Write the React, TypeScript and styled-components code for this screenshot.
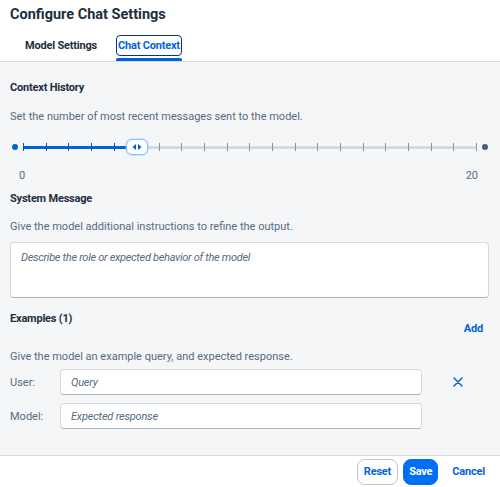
import React, { useState } from "react";
import styled, { createGlobalStyle } from "styled-components";

const GlobalStyle = createGlobalStyle`
  html, body {
    margin: 0;
    padding: 0;
    background: #ffffff;
    font-family: Roboto, "Liberation Sans", Arial, sans-serif;
    color: #1d2d3e;
  }
  * { box-sizing: border-box; }
`;

const Dialog = styled.div`
  width: 500px;
  height: 487px;
  display: flex;
  flex-direction: column;
  background: #fff;
`;

const Header = styled.header`
  background: #fff;
  padding: 0 10px;
  border-bottom: 1px solid #d9dcdf;
  box-shadow: 0 1px 1px rgba(0, 0, 0, 0.04);
`;

const Title = styled.h1`
  margin: 0;
  height: 30px;
  line-height: 30px;
  font-size: 14.5px;
  font-weight: 700;
  color: #1d2d3e;
`;

const TabBar = styled.div`
  display: flex;
  gap: 17px;
  padding-left: 13px;
  height: 31px;
`;

const Tab = styled.button<{ $active?: boolean }>`
  position: relative;
  background: none;
  border: none;
  padding: 0;
  font-family: inherit;
  font-size: 11px;
  letter-spacing: -0.2px;
  font-weight: 700;
  color: ${(p) => (p.$active ? "#0064d9" : "#1d2d3e")};
  cursor: pointer;

  span {
    display: inline-block;
    padding: 3px 1px;
    border: 1.5px solid ${(p) => (p.$active ? "#0032a5" : "transparent")};
    border-radius: 4px;
  }

  &::after {
    content: "";
    display: ${(p) => (p.$active ? "block" : "none")};
    position: absolute;
    left: 0;
    right: 0;
    bottom: 0;
    height: 3px;
    border-radius: 2px 2px 0 0;
    background: #0064d9;
  }
`;

const Content = styled.main`
  flex: 1;
  min-height: 0;
  background: #f5f6f7;
  padding: 0 11px 0 10px;
  display: flex;
  flex-direction: column;
`;

const SectionHead = styled.div`
  display: flex;
  justify-content: space-between;
  align-items: flex-start;
`;

const SectionTitle = styled.h2<{ $top: number }>`
  margin: ${(p) => p.$top}px 0 0;
  font-size: 11px;
  letter-spacing: -0.2px;
  font-weight: 700;
  line-height: 16px;
  color: #1d2d3e;
`;

const Description = styled.p<{ $top: number }>`
  margin: ${(p) => p.$top}px 0 0;
  font-size: 11px;
  line-height: 16px;
  color: #556b82;
`;

const SliderRow = styled.div`
  margin-top: 14px;
  height: 16px;
  display: flex;
  align-items: center;
`;

const EndDot = styled.span<{ $left?: boolean }>`
  width: 6px;
  height: 6px;
  border-radius: 50%;
  background: ${(p) => (p.$left ? "#0064d9" : "#475e75")};
  margin: ${(p) => (p.$left ? "0 5px 0 2px" : "0 1px 0 5px")};
  flex-shrink: 0;
`;

const Track = styled.div`
  position: relative;
  flex: 1;
  height: 3px;
  background: #d5dadd;
  border-radius: 2px;
  display: flex;
  justify-content: space-between;
  align-items: center;
`;

const Progress = styled.div`
  position: absolute;
  left: 0;
  top: 0;
  bottom: 0;
  background: #0064d9;
  border-radius: 2px;
`;

const Tick = styled.span<{ $on: boolean }>`
  position: relative;
  width: 1px;
  height: 8px;
  background: ${(p) => (p.$on ? "#0057b8" : "#8396a8")};
`;

const Handle = styled.div`
  position: absolute;
  top: 50%;
  width: 22px;
  height: 16px;
  margin-left: -11px;
  margin-top: -8px;
  background: #fff;
  border: 1px solid #89bfff;
  border-radius: 6px;
  box-shadow: 0 0 0 1px rgba(137, 191, 255, 0.35);
  display: flex;
  align-items: center;
  justify-content: center;
`;

const ScaleLabels = styled.div`
  margin-top: 14px;
  display: flex;
  justify-content: space-between;
  padding: 0 11px 0 9px;
  font-size: 11px;
  line-height: 14px;
  color: #556b82;
`;

const TextArea = styled.textarea`
  margin-top: 7px;
  width: 100%;
  height: 56px;
  resize: none;
  background: #fff;
  border: 1px solid #d5dadd;
  border-bottom-color: #aab4bd;
  border-radius: 4px;
  padding: 7px 10px;
  font-family: inherit;
  font-size: 11px;
  line-height: 16px;
  color: #1d2d3e;
  outline: none;

  &::placeholder {
    color: #556b82;
    font-style: italic;
    letter-spacing: -0.3px;
  }
`;

const LinkButton = styled.button`
  margin-top: 23px;
  background: none;
  border: none;
  padding: 0 6px 0 0;
  font-family: inherit;
  font-size: 11px;
  letter-spacing: -0.2px;
  font-weight: 700;
  line-height: 16px;
  color: #0064d9;
  cursor: pointer;
`;

const ExampleGrid = styled.div`
  margin-top: 4px;
  display: grid;
  grid-template-columns: 50px 362px 1fr;
  row-gap: 8px;
  align-items: center;
`;

const FieldLabel = styled.label`
  font-size: 11px;
  color: #556b82;
`;

const Input = styled.input`
  height: 26px;
  width: 100%;
  background: #fff;
  border: 1px solid #d5dadd;
  border-bottom-color: #aab4bd;
  border-radius: 4px;
  padding: 0 10px;
  font-family: inherit;
  font-size: 11px;
  color: #1d2d3e;
  outline: none;

  &::placeholder {
    color: #556b82;
    font-style: italic;
    letter-spacing: -0.2px;
  }
`;

const IconButton = styled.button`
  justify-self: center;
  margin-left: 4px;
  background: none;
  border: none;
  padding: 4px;
  display: flex;
  cursor: pointer;
`;

const Footer = styled.footer`
  height: 32px;
  flex-shrink: 0;
  border-top: 1px solid #d9dcdf;
  background: #fff;
  display: flex;
  justify-content: flex-end;
  align-items: center;
  gap: 5px;
  padding-right: 6px;
`;

const Button = styled.button<{ $variant: "default" | "emphasized" | "transparent" }>`
  height: 26px;
  padding: 0 ${(p) => (p.$variant === "transparent" ? "8px" : p.$variant === "emphasized" ? "5px" : "6px")};
  border-radius: 8px;
  font-family: inherit;
  font-size: 11px;
  letter-spacing: -0.2px;
  font-weight: 700;
  cursor: pointer;
  border: 1px solid
    ${(p) => (p.$variant === "default" ? "#bcc3ca" : p.$variant === "emphasized" ? "#0070f2" : "transparent")};
  background: ${(p) => (p.$variant === "emphasized" ? "#0070f2" : "#fff")};
  color: ${(p) => (p.$variant === "emphasized" ? "#fff" : "#0064d9")};
`;

const HandleGlyph = () => (
  <svg width="12" height="8" viewBox="0 0 12 8">
    <path d="M5 1 L1.5 4 L5 7 Z" fill="#0064d9" />
    <path d="M7 1 L10.5 4 L7 7 Z" fill="#0064d9" />
  </svg>
);

const CloseIcon = () => (
  <svg width="10" height="10" viewBox="0 0 10 10">
    <path d="M1 1 L9 9 M9 1 L1 9" stroke="#0064d9" strokeWidth="1.5" strokeLinecap="round" />
  </svg>
);

const App = () => {
  const [history] = useState(5);
  const max = 20;
  const pct = (history / max) * 100;

  return (
    <>
      <GlobalStyle />
      <Dialog>
        <Header>
          <Title>Configure Chat Settings</Title>
          <TabBar>
            <Tab>
              <span>Model Settings</span>
            </Tab>
            <Tab $active>
              <span>Chat Context</span>
            </Tab>
          </TabBar>
        </Header>

        <Content>
          <SectionTitle $top={18}>Context History</SectionTitle>
          <Description $top={13}>Set the number of most recent messages sent to the model.</Description>
          <SliderRow>
            <EndDot $left />
            <Track>
              <Progress style={{ width: `${pct}%` }} />
              {Array.from({ length: max + 1 }).map((_, i) => (
                <Tick key={i} $on={i <= history} />
              ))}
              <Handle style={{ left: `${pct}%` }}>
                <HandleGlyph />
              </Handle>
            </Track>
            <EndDot />
          </SliderRow>
          <ScaleLabels>
            <span>0</span>
            <span>20</span>
          </ScaleLabels>

          <SectionTitle $top={8}>System Message</SectionTitle>
          <Description $top={12}>Give the model additional instructions to refine the output.</Description>
          <TextArea placeholder="Describe the role or expected behavior of the model" />

          <SectionHead>
            <SectionTitle $top={13}>Examples (1)</SectionTitle>
            <LinkButton>Add</LinkButton>
          </SectionHead>
          <Description $top={12}>Give the model an example query, and expected response.</Description>
          <ExampleGrid>
            <FieldLabel>User:</FieldLabel>
            <Input placeholder="Query" />
            <IconButton aria-label="Remove example">
              <CloseIcon />
            </IconButton>
            <FieldLabel>Model:</FieldLabel>
            <Input placeholder="Expected response" />
            <span />
          </ExampleGrid>
        </Content>

        <Footer>
          <Button $variant="default">Reset</Button>
          <Button $variant="emphasized">Save</Button>
          <Button $variant="transparent">Cancel</Button>
        </Footer>
      </Dialog>
    </>
  );
};

export default App;
